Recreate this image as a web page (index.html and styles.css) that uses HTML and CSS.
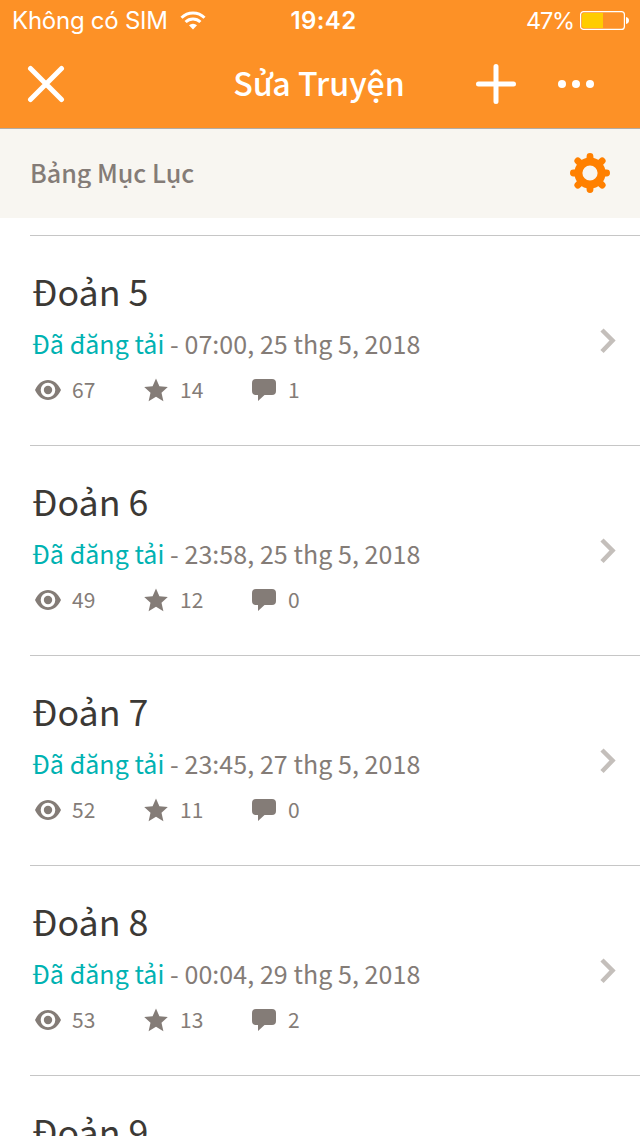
FILE: index.html
```html
<!DOCTYPE html>
<html lang="vi">
<head>
<meta charset="utf-8">
<title>Sửa Truyện</title>
<link rel="stylesheet" href="styles.css">
</head>
<body>
<svg width="0" height="0" class="defs">
  <symbol id="eye" viewBox="0 0 28 20"><path fill-rule="evenodd" d="M1 10C4 3.500 8.500 0 14 0s10 3.500 13 10c-3 6.500-7.500 10-13 10S4 16.500 1 10zM14 2.700a7.300 7.300 0 1 0 0 14.600a7.300 7.300 0 0 0 0-14.600z"/><circle cx="14" cy="10" r="4.200"/></symbol>
  <symbol id="star" viewBox="0 0 24 24"><path d="M12 .5l3.400 7.800 8.400.8-6.300 5.600 1.900 8.500L12 18.800l-7.400 4.400 1.900-8.500L.2 9.100l8.400-.8z"/></symbol>
  <symbol id="comment" viewBox="0 0 24 22"><path d="M4 0h16a4 4 0 0 1 4 4v8a4 4 0 0 1-4 4h-7.500L6 22v-6H4a4 4 0 0 1-4-4V4a4 4 0 0 1 4-4z"/></symbol>
  <symbol id="chevron" viewBox="0 0 18 28"><path d="M3 3l10.500 10.500L3 24.500" fill="none" stroke="#c4bfbb" stroke-width="4.500"/></symbol>
</svg>
<header class="top">
  <div class="status">
    <div class="carrier"><span>Không có SIM</span>
      <svg class="wifi" width="26" height="20" viewBox="0 0 26 20"><g fill="none" stroke="#fff" stroke-width="3"><path d="M1.500 6.800a16.300 16.300 0 0 1 23 0"/><path d="M5.600 11a10.500 10.500 0 0 1 14.800 0"/></g><path d="M13 18.500l-4-4.200a5.700 5.700 0 0 1 8 0z" fill="#fff"/></svg>
    </div>
    <div class="clock">19:42</div>
    <div class="power"><span class="percent">47%</span>
      <svg class="battery" width="50" height="20" viewBox="0 0 50 20"><rect x=".6" y=".6" width="43.800" height="17.800" rx="3" fill="none" stroke="#fff" stroke-width="1.200"/><path d="M4 2h19v15H4a2 2 0 0 1-2-2V4a2 2 0 0 1 2-2z" fill="#fc0"/><path d="M46 6q3 .8 3 3.500T46 13z" fill="#fff"/></svg>
    </div>
  </div>
  <nav class="nav">
    <svg class="close" width="38" height="38" viewBox="0 0 38 38"><path d="M3.500 3.500l31 31m0-31l-31 31" stroke="#fff" stroke-width="5" stroke-linecap="round"/></svg>
    <h1 class="heading">Sửa Truyện</h1>
    <div class="actions">
      <svg width="40" height="40" viewBox="0 0 40 40"><path d="M20 2.500v35M2.500 20h35" stroke="#fff" stroke-width="5" stroke-linecap="round"/></svg>
      <svg width="36" height="8" viewBox="0 0 36 8"><g fill="#fff"><circle cx="4" cy="4" r="4"/><circle cx="18" cy="4" r="4"/><circle cx="32" cy="4" r="4"/></g></svg>
    </div>
  </nav>
</header>
<section class="section">
  <h2 class="section-title">Bảng Mục Lục</h2>
  <svg width="40" height="40" viewBox="-20 -20 40 40"><g stroke="#ff8000" stroke-width="6.800" stroke-linecap="round"><path d="M0-16.600V-12M0 16.600V12M-16.600 0H-12M16.600 0H12M-12.200-12.200L-9-9M12.200-12.200L9-9M-12.200 12.200L-9 9M12.200 12.200L9 9"/></g><circle r="11.600" fill="none" stroke="#ff8000" stroke-width="8"/></svg>
</section>
<main class="list">
  <article class="row">
    <div class="info">
      <h3 class="name">Đoản 5</h3>
      <p class="meta"><span class="published">Đã đăng tải</span> - 07:00, 25 thg 5, 2018</p>
      <div class="stats"><span class="stat"><svg class="eye"><use href="#eye"/></svg>67</span><span class="stat"><svg class="star"><use href="#star"/></svg>14</span><span class="stat"><svg class="comment"><use href="#comment"/></svg>1</span></div>
    </div>
    <svg class="chevron"><use href="#chevron"/></svg>
  </article>
  <article class="row">
    <div class="info">
      <h3 class="name">Đoản 6</h3>
      <p class="meta"><span class="published">Đã đăng tải</span> - 23:58, 25 thg 5, 2018</p>
      <div class="stats"><span class="stat"><svg class="eye"><use href="#eye"/></svg>49</span><span class="stat"><svg class="star"><use href="#star"/></svg>12</span><span class="stat"><svg class="comment"><use href="#comment"/></svg>0</span></div>
    </div>
    <svg class="chevron"><use href="#chevron"/></svg>
  </article>
  <article class="row">
    <div class="info">
      <h3 class="name">Đoản 7</h3>
      <p class="meta"><span class="published">Đã đăng tải</span> - 23:45, 27 thg 5, 2018</p>
      <div class="stats"><span class="stat"><svg class="eye"><use href="#eye"/></svg>52</span><span class="stat"><svg class="star"><use href="#star"/></svg>11</span><span class="stat"><svg class="comment"><use href="#comment"/></svg>0</span></div>
    </div>
    <svg class="chevron"><use href="#chevron"/></svg>
  </article>
  <article class="row">
    <div class="info">
      <h3 class="name">Đoản 8</h3>
      <p class="meta"><span class="published">Đã đăng tải</span> - 00:04, 29 thg 5, 2018</p>
      <div class="stats"><span class="stat"><svg class="eye"><use href="#eye"/></svg>53</span><span class="stat"><svg class="star"><use href="#star"/></svg>13</span><span class="stat"><svg class="comment"><use href="#comment"/></svg>2</span></div>
    </div>
    <svg class="chevron"><use href="#chevron"/></svg>
  </article>
  <article class="row">
    <div class="info">
      <h3 class="name">Đoản 9</h3>
    </div>
  </article>
</main>
</body>
</html>
```
FILE: styles.css
```css
* { box-sizing: border-box; margin: 0; }
body {
  width: 640px;
  height: 1136px;
  overflow: hidden;
  display: flex;
  flex-direction: column;
  background: #fff;
  font-family: "Noto Sans CJK SC", "Noto Sans", sans-serif;
}
svg { display: block; flex: none; }
.defs { display: none; }
.top {
  height: 129px;
  flex: none;
  background: #fd9126;
  border-bottom: 1px solid #b2aca4;
  color: #fff;
}
.status {
  height: 40px;
  display: grid;
  grid-template-columns: 1fr auto 1fr;
  align-items: center;
  padding: 2px 10px 0 12px;
  font: 400 24px/38px Inter, sans-serif;
}
.carrier, .power { display: flex; align-items: center; }
.carrier { gap: 12px; letter-spacing: -0.25px; }
.clock { font-weight: 600; padding-left: 5px; letter-spacing: 0.4px; }
.power { justify-content: flex-end; gap: 6px; }
.percent { font-size: 23.5px; letter-spacing: -1.2px; }
.nav {
  height: 88px;
  display: grid;
  grid-template-columns: 1fr auto 1fr;
  align-items: center;
  padding: 0 46px 0 27px;
}
.heading {
  font-size: 32.2px;
  line-height: 48px;
  font-weight: 500;
  padding: 0 0 5px 17px;
}
.actions { display: flex; align-items: center; justify-content: flex-end; gap: 42px; }
.section {
  height: 89px;
  flex: none;
  display: flex;
  align-items: center;
  justify-content: space-between;
  padding: 0 30px 2px;
  background: #f8f6f1;
}
.section-title {
  height: 30px;
  overflow: hidden;
  font-size: 25.1px;
  line-height: 28px;
  font-weight: 500;
  color: #847c77;
}
.list { height: 918px; overflow: hidden; padding: 17px 0 0 30px; }
.row {
  height: 210px;
  display: flex;
  justify-content: space-between;
  align-items: flex-start;
  padding: 32px 23px 0 2px;
  border-top: 1px solid #c6c6c6;
}
.name { font-size: 35.8px; line-height: 44px; font-weight: 400; color: #3c3935; }
.meta { margin-top: 13px; font-size: 25px; line-height: 36px; letter-spacing: 0.06px; color: #847c77; white-space: nowrap; }
.published { color: #00b2b2; }
.stats {
  margin-top: 15px;
  display: grid;
  grid-template-columns: 110px 108px auto;
  padding-left: 2px;
  font-size: 21px;
  line-height: 24px;
  color: #847c77;
}
.stat { display: flex; align-items: center; gap: 12px; }
.stat svg { fill: #847c77; margin-top: 2px; }
.stat .eye { width: 28px; height: 20px; margin-left: 0; margin-right: -2px; }
.stat .star { width: 24px; height: 24px; margin-bottom: -1px; }
.stat .comment { width: 24px; height: 22px; }
.chevron { width: 18px; height: 28px; margin-top: 59px; }
```
